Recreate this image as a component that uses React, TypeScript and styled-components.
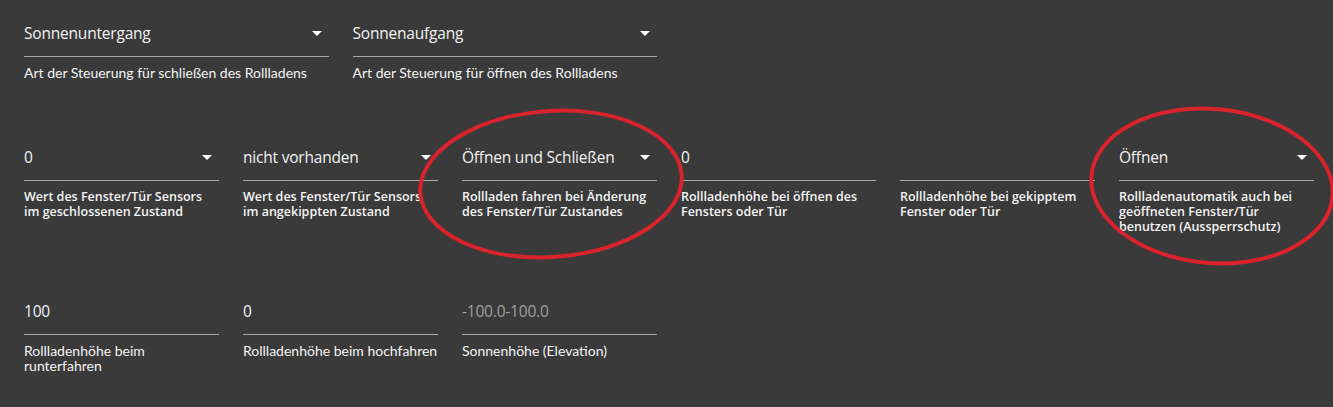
import React from 'react';
import styled, { createGlobalStyle } from 'styled-components';

const GlobalStyle = createGlobalStyle`
  html, body {
    margin: 0;
    padding: 0;
    background: #3a3a3a;
    font-family: 'Open Sans', 'Noto Sans', sans-serif;
    color: #f2f2f2;
  }
`;

const Page = styled.div`
  position: relative;
  width: 1333px;
  height: 407px;
  overflow: hidden;
  background: #3a3a3a;
`;

const Container = styled.div`
  width: 1314px;
  margin-left: 12px;
  padding-top: 9px;
`;

const Row = styled.div`
  display: flex;
  margin-bottom: 53px;
`;

const Col = styled.div<{ $span: number }>`
  width: ${p => (p.$span / 12) * 100}%;
  padding: 0 12px;
  box-sizing: border-box;
`;

const Field = styled.div`
  position: relative;
  height: 47px;
  border-bottom: 1px solid #a9a9a9;
  display: flex;
  align-items: center;
`;

const Value = styled.span<{ $placeholder?: boolean }>`
  font-size: 15.5px;
  color: ${p => (p.$placeholder ? '#a0a0a0' : '#f2f2f2')};
  letter-spacing: -0.2px;
`;

const Caret = styled.svg`
  position: absolute;
  right: 0;
  top: 12px;
  width: 24px;
  height: 24px;
  fill: #ffffff;
`;

const Helper = styled.div<{ $bold?: boolean }>`
  margin-top: 8px;
  font-family: ${p => (p.$bold ? "'Open Sans', sans-serif" : "Lato, 'Open Sans', sans-serif")};
  font-size: ${p => (p.$bold ? '12.5px' : '14px')};
  line-height: 15px;
  font-weight: ${p => (p.$bold ? 600 : 400)};
  color: #f4f4f4;
`;

const Line = styled.div`
  white-space: nowrap;
`;

const Marks = styled.svg`
  position: absolute;
  left: 0;
  top: 0;
  width: 1333px;
  height: 407px;
  pointer-events: none;
`;

type Item = { value: string; helper: string[]; select?: boolean; placeholder?: boolean };

const Input: React.FC<{ item: Item; span: number; bold?: boolean }> = ({ item, span, bold }) => (
  <Col $span={span}>
    <Field>
      <Value $placeholder={item.placeholder}>{item.value}</Value>
      {item.select && (
        <Caret viewBox="0 0 24 24">
          <path d="M7 10l5 5 5-5z" />
        </Caret>
      )}
    </Field>
    <Helper $bold={bold}>
      {item.helper.map(l => (
        <Line key={l}>{l}</Line>
      ))}
    </Helper>
  </Col>
);

const rowOne: Item[] = [
  { value: 'Sonnenuntergang', helper: ['Art der Steuerung für schließen des Rollladens'], select: true },
  { value: 'Sonnenaufgang', helper: ['Art der Steuerung für öffnen des Rollladens'], select: true },
];

const rowTwo: Item[] = [
  { value: '0', helper: ['Wert des Fenster/Tür Sensors', 'im geschlossenen Zustand'], select: true },
  { value: 'nicht vorhanden', helper: ['Wert des Fenster/Tür Sensors', 'im angekippten Zustand'], select: true },
  { value: 'Öffnen und Schließen', helper: ['Rollladen fahren bei Änderung', 'des Fenster/Tür Zustandes'], select: true },
  { value: '0', helper: ['Rollladenhöhe bei öffnen des', 'Fensters oder Tür'] },
  { value: '', helper: ['Rollladenhöhe bei gekipptem', 'Fenster oder Tür'] },
  {
    value: 'Öffnen',
    helper: ['Rollladenautomatik auch bei', 'geöffneten Fenster/Tür', 'benutzen (Aussperrschutz)'],
    select: true,
  },
];

const rowThree: Item[] = [
  { value: '100', helper: ['Rollladenhöhe beim', 'runterfahren'] },
  { value: '0', helper: ['Rollladenhöhe beim hochfahren'] },
  { value: '-100.0-100.0', helper: ['Sonnenhöhe (Elevation)'], placeholder: true },
];

const App: React.FC = () => (
  <>
    <GlobalStyle />
    <Page>
      <Container>
        <Row>
          {rowOne.map(it => (
            <Input key={it.helper[0]} item={it} span={3} />
          ))}
        </Row>
        <Row>
          {rowTwo.map(it => (
            <Input key={it.helper.join()} item={it} span={2} bold />
          ))}
        </Row>
        <Row>
          {rowThree.map(it => (
            <Input key={it.helper[0]} item={it} span={2} />
          ))}
        </Row>
      </Container>
      <Marks viewBox="0 0 1333 407">
        <ellipse cx="551" cy="184" rx="131" ry="73" fill="none" stroke="#d9232d" strokeWidth="4" transform="rotate(-4 551 184)" />
        <ellipse cx="1212" cy="186" rx="121" ry="77" fill="none" stroke="#d9232d" strokeWidth="4" transform="rotate(5 1212 186)" />
      </Marks>
    </Page>
  </>
);

export default App;
